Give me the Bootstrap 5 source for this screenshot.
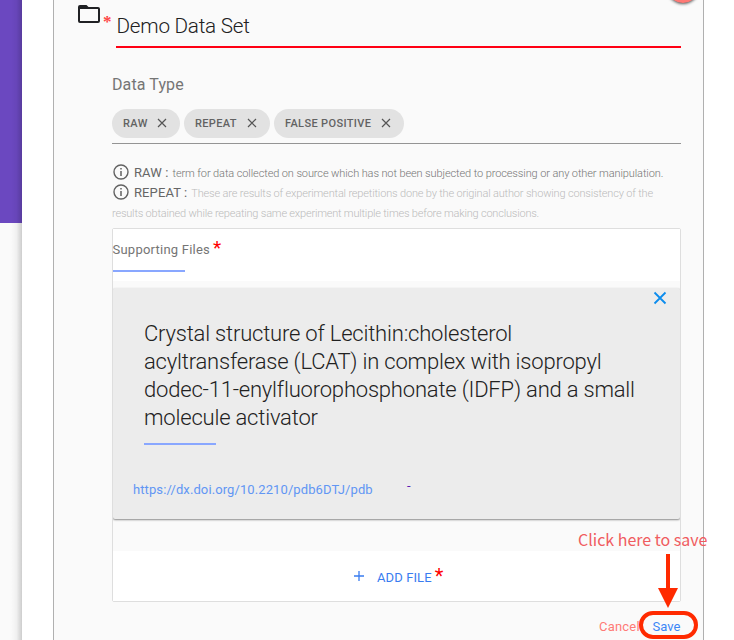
<!DOCTYPE html>
<html lang="en">
<head>
<meta charset="utf-8">
<meta name="viewport" content="width=device-width, initial-scale=1">
<title>Demo Data Set</title>
<link href="https://cdn.jsdelivr.net/npm/bootstrap@5.3.0/dist/css/bootstrap.min.css" rel="stylesheet">
<style>
body{font-family:Roboto,"Liberation Sans",sans-serif;background:#fafafa;width:734px;height:640px;color:#757575}
.rail{width:22px;background:#fafafa}
.rail-top{height:223px;background:#6b48c0}
.rail-shade{inset:0;background:linear-gradient(90deg,transparent 50%,rgba(0,0,0,.04) 75%,rgba(0,0,0,.18))}
.sheet{background:#fff;padding-left:31px}
.panel{width:651px;background:#fafafa;border:solid #b0b0b0;border-width:0 1px}
.fab{width:32px;height:32px;left:613px;top:-29px;background:#ff7975;box-shadow:0 1px 3px rgba(0,0,0,.65)}
.title-row{height:48px;padding-left:22px}
.icon-cell{width:40px;height:48px}
.folder{margin:2px 0 0 0}
.title-star{left:27px;top:11px;font:700 17px/22px "Liberation Serif",serif;color:#ff4545}
.title-input{width:565px;height:48px;border-bottom:2px solid #ff0013;padding:12px 0 0 .5px;font-size:20.7px;letter-spacing:-.24px;font-weight:300;line-height:28px;color:#212121}
.column{width:569px;margin-left:58px}
.type-label{height:61px;padding-top:27px;font-size:16px;letter-spacing:.1px;line-height:20px}
.chips{height:35px;border-bottom:1px solid #949494}
.chip{height:29px;border-radius:15px;background:#e2e2e2;font-size:11px;letter-spacing:.36px;font-weight:500;color:#626262;padding:0 13px 1px 11px}
.chip-text{padding-top:2px}
.notes{padding-top:19px;height:84px;font-size:11px;font-weight:300;line-height:20px}
.note{height:20px}
.notes b{font-size:13px;font-weight:400;color:#666;letter-spacing:.1px;margin-right:4px}
.note span{padding-top:2px}
.info{width:18px;height:18px;margin:-3px 4px 0 0}
.n1{letter-spacing:-.105px}
.n2{letter-spacing:-.17px}
.n3{letter-spacing:-.2px;margin-top:1px}
.pale{color:#bbb}
.star{color:#f00}
.files{height:374px;border:1px solid #dedede;border-radius:2px}
.files-head{height:52px;background:#fff;padding-top:9px;font-size:13px}
.files-title{line-height:23px;height:32px;letter-spacing:.23px;margin-left:-.5px}
.files-title .star{font-size:19px;line-height:1px;margin-left:3px}
.rule{width:72px;height:2px;background:#89a7ff}
.record{margin-top:7px;height:231px;background:#ececec;border-radius:2px;padding:32px 20px 0;box-shadow:0 1px 2px rgba(0,0,0,.45);clip-path:inset(-2px 0 -4px 0)}
.close-x{right:12.5px;top:2px}
.record-title{font-size:22px;letter-spacing:-.195px;font-weight:300;line-height:28px;color:#212121;padding-left:11px;height:123px;white-space:nowrap}
.record .rule{margin-left:11px}
.record-link{font-size:13px;letter-spacing:.1px;line-height:20px;margin-top:35px;color:#6196f4}
.record-link a{color:inherit;width:274px}
.dash{color:#5a20b5;margin-top:-4px}
.add-row{margin-top:32px;height:50px;background:#fff;font-size:13px;color:#397cf0;padding-left:240px}
.add-text{padding-top:3px;letter-spacing:.1px}
.add-row .star{font-size:20px;margin:0 0 0 3px}
.actions{height:38px;padding:13px 0 0 487px;font-size:13px;line-height:23px}
.cancel{color:#ff7b76;width:53.500px;letter-spacing:.2px}
.save{color:#3c86f6}
.callout-text{left:578px;top:528px;font:16px/22px "Noto Sans CJK SC",sans-serif;letter-spacing:0;color:#f05c60;white-space:nowrap}
.arrow{left:657px;top:554px}
.ring{left:639px;top:611px;width:59px;height:28px;border:4px solid #ff2a00;border-radius:14px}
</style>
</head>
<body class="overflow-hidden position-relative">
<div class="d-flex h-100">
  <aside class="rail position-relative flex-shrink-0"><div class="rail-top"></div><div class="rail-shade position-absolute"></div></aside>
  <main class="sheet flex-grow-1">
    <section class="panel h-100 position-relative">
      <div class="fab position-absolute rounded-circle"></div>
      <header class="title-row d-flex">
        <div class="icon-cell position-relative">
          <svg class="folder d-block" width="26" height="24" viewBox="0 0 26 24" fill="none"><path d="M4 3h6.500l2 2H22q2 0 2 2v12q0 2-2 2H4q-2 0-2-2V5q0-2 2-2m0 4v12h18V7z" fill="#202124" fill-rule="evenodd"/></svg>
          <span class="title-star position-absolute">*</span>
        </div>
        <div class="title-input">Demo Data Set</div>
      </header>
      <div class="column">
        <div class="type-label">Data Type</div>
        <div class="chips d-flex align-items-start">
          <span class="chip d-flex align-items-center justify-content-between" style="width:68px"><span class="chip-text">RAW</span><svg width="10" height="10"><path d="M1 1l8 8M9 1L1 9" stroke="#555" stroke-width="1.2"/></svg></span>
          <span class="chip d-flex align-items-center justify-content-between ms-1" style="width:86px"><span class="chip-text">REPEAT</span><svg width="10" height="10"><path d="M1 1l8 8M9 1L1 9" stroke="#555" stroke-width="1.2"/></svg></span>
          <span class="chip d-flex align-items-center justify-content-between ms-1" style="width:130px"><span class="chip-text">FALSE POSITIVE</span><svg width="10" height="10"><path d="M1 1l8 8M9 1L1 9" stroke="#555" stroke-width="1.2"/></svg></span>
        </div>
        <div class="notes text-nowrap">
          <div class="note d-flex align-items-center"><svg class="info" viewBox="0 0 18 18" fill="none"><circle cx="9" cy="9" r="7" stroke="#626262" stroke-width="1.4"/><path d="M9 8v5M9 5v1.5" stroke="#626262" stroke-width="1.5"/></svg><b>RAW :</b><span class="n1">term for data collected on source which has not been subjected to processing or any other manipulation.</span></div>
          <div class="note d-flex align-items-center"><svg class="info" viewBox="0 0 18 18" fill="none"><circle cx="9" cy="9" r="7" stroke="#626262" stroke-width="1.4"/><path d="M9 8v5M9 5v1.5" stroke="#626262" stroke-width="1.5"/></svg><b>REPEAT :</b><span class="pale n2">These are results of experimental repetitions done by the original author showing consistency of the</span></div>
          <div class="pale n3">results obtained while repeating same experiment multiple times before making conclusions.</div>
        </div>
        <div class="files">
          <div class="files-head"><div class="files-title">Supporting Files<span class="star">*</span></div><div class="rule"></div></div>
          <article class="record position-relative">
            <svg class="close-x position-absolute" width="16" height="16"><path d="M2.5 2.5l11 11M13.500 2.500l-11 11" stroke="#0c8ced" stroke-width="1.8"/></svg>
            <div class="record-title">Crystal structure of Lecithin:cholesterol<br>acyltransferase (LCAT) in complex with isopropyl<br>dodec-11-enylfluorophosphonate (IDFP) and a small<br>molecule activator</div>
            <div class="rule"></div>
            <div class="record-link d-flex"><a class="text-decoration-none">https://dx.doi.org/10.2210/pdb6DTJ/pdb</a><span class="dash">-</span></div>
          </article>
          <div class="add-row d-flex align-items-center"><svg width="12" height="12"><path d="M6 1v10M1 6h10" stroke="#397cf0" stroke-width="1.3"/></svg><span class="add-text ps-2 ms-1">ADD FILE</span><span class="star">*</span></div>
        </div>
        <div class="actions d-flex"><span class="cancel">Cancel</span><span class="save">Save</span></div>
      </div>
    </section>
  </main>
</div>
<div class="callout-text position-absolute">Click here to save</div>
<svg class="arrow position-absolute" width="22" height="54"><path d="M9 0h4v34h8L11 54 1 34h8z" fill="#ff2a00"/></svg>
<div class="ring position-absolute"></div>
<script src="https://cdn.jsdelivr.net/npm/bootstrap@5.3.0/dist/js/bootstrap.bundle.min.js"></script>
</body>
</html>
